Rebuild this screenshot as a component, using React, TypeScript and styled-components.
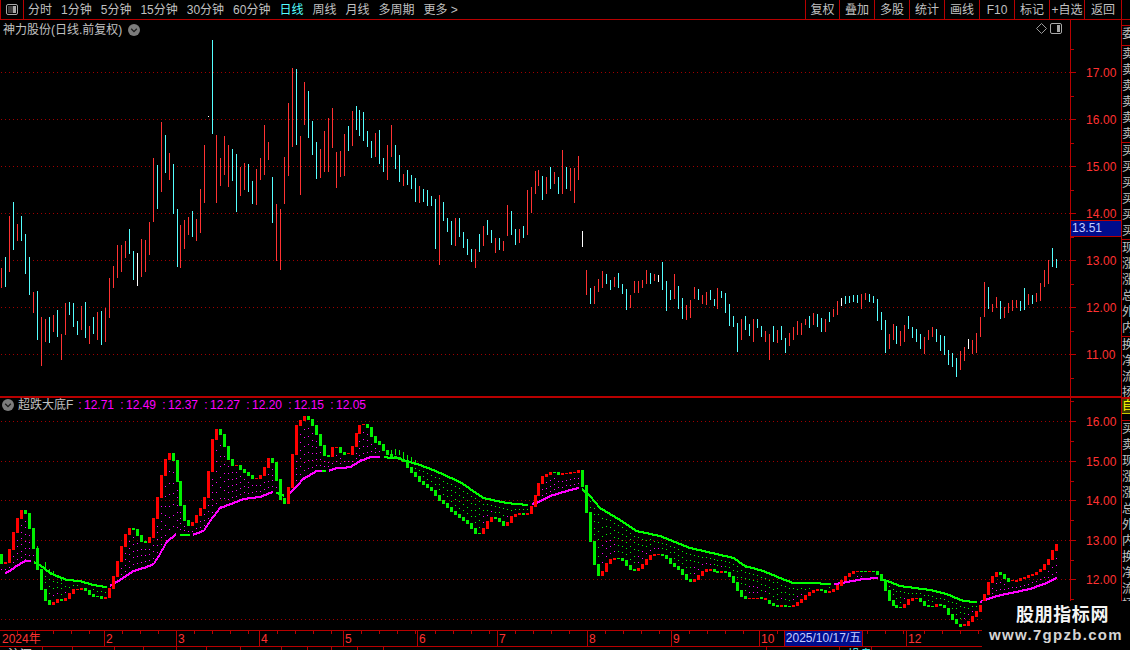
import React from "react";
import styled, { createGlobalStyle } from "styled-components";

const RED_LINE = "#b80000";
const AXIS_RED = "#ff3232";
const UI_FONT = `"Liberation Sans", "Noto Sans CJK SC", sans-serif`;

const GlobalStyle = createGlobalStyle`
  html, body { margin: 0; padding: 0; background: #000; overflow: hidden; }
  #root { width: 1130px; height: 650px; }
`;

const Screen = styled.div`
  position: relative;
  width: 1130px;
  height: 650px;
  background: #000;
  overflow: hidden;
  display: flex;
  flex-direction: column;
  font-family: ${UI_FONT};
  font-size: 12px;
  color: #c0c0c0;
`;

/* ---------- toolbar ---------- */
const Toolbar = styled.div`
  display: flex;
  align-items: stretch;
  height: 20px;
  box-sizing: border-box;
  border-bottom: 1px solid ${RED_LINE};
  flex: none;
`;
const LayoutButton = styled.div`
  width: 24px;
  box-sizing: border-box;
  border-left: 1px solid ${RED_LINE};
  border-right: 1px solid ${RED_LINE};
  display: flex;
  align-items: center;
  justify-content: center;
`;
const Tabs = styled.div`
  display: flex;
  align-items: center;
  gap: 9px;
  margin-left: 4px;
  padding-top: 1px;
`;
const Tab = styled.span<{ $active?: boolean }>`
  color: ${(p) => (p.$active ? "#54ffff" : "#c0c0c0")};
  line-height: 18px;
  white-space: nowrap;
`;
const ToolActions = styled.div`
  display: flex;
  margin-left: auto;
  margin-right: 8px;
`;
const ToolAction = styled.div<{ $w: number; $last?: boolean }>`
  width: ${(p) => p.$w}px;
  box-sizing: border-box;
  border-left: 1px solid ${RED_LINE};
  border-right: ${(p) => (p.$last ? `1px solid ${RED_LINE}` : "0")};
  text-align: center;
  padding-top: 1px;
  line-height: 18px;
  white-space: nowrap;
`;

/* ---------- main ---------- */
const Main = styled.div`
  display: flex;
  flex: none;
  height: 610px;
`;
const Charts = styled.div`
  display: flex;
  flex-direction: column;
  width: 1121px;
`;
const Pane = styled.div<{ $h: number; $rule?: boolean }>`
  position: relative;
  display: flex;
  height: ${(p) => p.$h}px;
  box-sizing: border-box;
  border-bottom: ${(p) => (p.$rule ? `2px solid ${RED_LINE}` : "0")};
`;
const Plot = styled.svg`
  display: block;
  width: 1070px;
  height: 100%;
  flex: none;
`;
const AxisWrap = styled.svg`
  display: block;
  width: 51px;
  height: 100%;
  flex: none;
  border-left: 1px solid ${RED_LINE};
  box-sizing: border-box;
`;
const PaneTitle = styled.div`
  position: absolute;
  top: 2px;
  left: 3px;
  display: flex;
  align-items: center;
  gap: 6px;
  line-height: 16px;
  white-space: nowrap;
`;
const IndicatorTitle = styled(PaneTitle)`
  top: -1px;
  left: 2px;
  gap: 4px;
`;
const IndicatorName = styled.span`
  margin-right: 1px;
`;
const ValueList = styled.div`
  display: flex;
  color: #ff00ff;
  margin-left: 0;
`;
const Value = styled.span`
  width: 42px;
  white-space: nowrap;
  word-spacing: -1px;
`;
const PaneCorner = styled.div`
  position: absolute;
  top: 3px;
  left: 1036px;
  display: flex;
  align-items: center;
  gap: 3px;
`;
const PriceTag = styled.div`
  position: absolute;
  left: 1071px;
  top: 200px;
  width: 50px;
  height: 17px;
  box-sizing: border-box;
  border-top: 1px solid ${RED_LINE};
  border-bottom: 1px solid ${RED_LINE};
  background: #000c8c;
  color: #c4ccff;
  line-height: 15px;
  padding-left: 1px;
`;

/* ---------- clipped side panel ---------- */
const Strip = styled.div`
  width: 9px;
  box-sizing: border-box;
  border-left: 1px solid ${RED_LINE};
  display: flex;
  flex-direction: column;
  overflow: hidden;
`;
const StripGroup = styled.div<{ $h: number; $heavy?: boolean }>`
  height: ${(p) => p.$h}px;
  flex: none;
  box-sizing: border-box;
  border-top: ${(p) => (p.$heavy ? 2 : 1)}px solid ${RED_LINE};
  overflow: hidden;
`;
const StripChar = styled.div<{ $h?: number; $yellow?: boolean }>`
  height: ${(p) => p.$h ?? 16}px;
  line-height: ${(p) => p.$h ?? 16}px;
  width: 12px;
  font-size: 12px;
  color: ${(p) => (p.$yellow ? "#ffff00" : "#c0c0c0")};
  background: ${(p) => (p.$yellow ? "#3a3a00" : "transparent")};
  outline: ${(p) => (p.$yellow ? "1px solid #c8c800" : "0")};
`;

/* ---------- time axis ---------- */
const TimeAxis = styled.div`
  position: relative;
  display: flex;
  height: 16px;
  flex: none;
  box-sizing: border-box;
  border-top: 1px solid ${RED_LINE};
`;
const MonthCell = styled.div<{ $w: number; $first?: boolean }>`
  width: ${(p) => p.$w}px;
  flex: none;
  box-sizing: border-box;
  border-left: ${(p) => (p.$first ? "0" : `1px solid ${RED_LINE}`)};
  padding-left: ${(p) => (p.$first ? 2 : 1)}px;
  color: ${AXIS_RED};
  line-height: 16px;
  white-space: nowrap;
  background: repeating-linear-gradient(
    to right,
    transparent 0,
    transparent 17px,
    ${RED_LINE} 17px,
    ${RED_LINE} 18px
  ) 0 0 / 100% 3px no-repeat;
`;
const CursorDate = styled.div`
  position: absolute;
  left: 784px;
  top: 0;
  width: 79px;
  height: 15px;
  box-sizing: border-box;
  border-left: 1px solid ${RED_LINE};
  border-right: 1px solid ${RED_LINE};
  background: #000c8c;
  color: #c4ccff;
  line-height: 15px;
  text-align: center;
  white-space: nowrap;
`;
const StatusBar = styled.div`
  display: flex;
  flex: none;
  height: 4px;
  box-sizing: border-box;
  border-top: 1px solid ${RED_LINE};
  overflow: hidden;
`;
const StatusCell = styled.div<{ $w: number; $color?: string }>`
  width: ${(p) => p.$w}px;
  flex: none;
  box-sizing: border-box;
  border-right: 1px solid ${RED_LINE};
  color: ${(p) => p.$color ?? "#e0e0e0"};
  line-height: 16px;
  padding-left: 8px;
  white-space: nowrap;
`;

/* ---------- watermark ---------- */
const Watermark = styled.div`
  position: absolute;
  left: 982px;
  top: 601px;
  width: 148px;
  height: 49px;
  background: #000;
  display: flex;
  flex-direction: column;
  align-items: center;
`;
const WatermarkTitle = styled.div`
  margin: 0 0 0 13px;
  font-family: "Noto Sans CJK SC", sans-serif;
  font-weight: 700;
  font-size: 18px;
  line-height: 24px;
  letter-spacing: 0.6px;
  color: #f4f4f4;
`;
const WatermarkUrl = styled.div`
  font-family: "Liberation Sans", sans-serif;
  font-weight: 700;
  font-size: 15px;
  line-height: 20px;
  letter-spacing: 1.3px;
  color: #d4d4d4;
`;

/* ---------- data ---------- */
const xOf = (i: number) => 1 + 4 * i - Math.floor(i / 45);

type Seg = { t: number; b: number; c: string };
const parse = (oy: number, s: string): Seg[] =>
  s
    .trim()
    .split(/\s+/)
    .map((tok) => {
      const m = tok.match(/^(\d+)-(\d+)([a-z])$/)!;
      return {
        t: oy + Math.round(+m[1] / 3),
        b: oy + Math.round(+m[2] / 3),
        c: m[3],
      };
    });

const priceBars: Seg[] = [
  ...parse(40, `684-744r 651-741c 528-696r 486-630c 552-603r 528-603c 582-702c 651-765c 756-819r 753-900c
  831-978r 837-906r 831-909c 825-876r 810-891c 882-960r 789-885r 786-825c 789-861c 843-885c 798-870r 786-894c
  858-912r 831-882c 816-900r 813-915c 803-906r 714-834r 678-744r 615-714r 615-696r 603-654r 567-642c 633-720c
  639-738w 597-711r 600-696r 546-645r 354-546r 375-507c 246-456r 285-399c 339-420r 372-522c 507-681c 555-684r
  540-627r 531-585r 513-591c 537-603r 447-579r 315-489r 228-231w 0-282c 285-489r 354-438r 288-405r 315-441r
  327-423c 342-516c 381-468r 369-450r 372-456c 423-492c 387-495r 354-420r 255-405r 306-360r 411-549c 492-663r
  507-690r 351-492r 189-408r 84-321r 87-315c`),
  ...parse(60, `228-405r 66-195r 93-234c 183-285c 246-357c 267-354r 213-336r 174-336r 144-264r 276-384r 273-351r
  222-348r 198-273c 153-258r 138-210c 150-228c 156-243c 213-261c 243-294c 219-291r 210-312c 294-336c 255-360r
  195-291r 255-327c 285-366c 342-378r 330-375c 345-387c 354-426c 378-429r 387-426c 390-438c 408-438c 417-567c
  405-615r 426-483c 474-516c 483-555c 474-558r 474-531c 516-564c 537-585c 567-606c 567-624r 522-576c 498-558r
  480-525c 510-549c 534-579r 534-570c 543-573r 435-528r 453-525c 507-555c 507-549r 498-534c 390-525r 381-459r
  333-402r 330-378r 348-420c 351-402r 321-387c 336-372r 351-402c 270-402r 321-387c 324-393r 324-429r 288-360r
  513-561w`),
  ...parse(220, `150-225r 204-252c 198-252r 177-216r 153-204r 162-192c 180-210c 171-201r 159-204c 192-222c 207-270c
  225-264r 183-219r 183-219r 180-204r 150-192r 159-192c 162-183r 165-186w 126-210c 183-273c 210-240c 162-237r
  198-267c 234-297c 255-300r 240-294r 201-237r 207-240c 225-252r 216-255r 210-240c 237-258c 204-267r 213-234c
  219-279c 252-318c 288-321c 309-396c 297-360r 288-330c 312-348c 297-366r 297-324c 318-351c 333-366r 342-420r
  318-366c 330-369r 318-360c 354-399c 339-378r 321-360r 303-345r 309-345r 297-315r 288-324c 279-315r 282-321c
  294-336c 297-336r 276-306c 267-291r 243-285r 234-258w 228-252c 228-249c 225-246c 225-249c 222-267r 219-240r
  222-246c 228-249c 237-303c 276-330c 300-399c 342-387r 312-360r 318-372c 333-378r 315-366r 288-327c 321-354c
  327-366c 342-387c 351-402r 330-360r 321-351r 327-366c 345-393c 348-405c 390-435c 399-441c 414-471c 393-450r
  381-423r 357-387w 360-402r 339-399r 291-351r 186-291r 201-267c 252-276r 231-264r 243-297c 261-294r 249-279r
  240-273r 240-264r 243-273c 204-270c 222-255r 225-252c 219-246r 189-243r 150-201r 120-192r 84-141c 117-144c`),
];

const candles: Seg[] = [
  ...parse(410, `432-462g 456-462r 417-459r 366-420r 324-369r 300-327r 300-312g 309-357g 354-417g 414-480g 477-540g
  537-573g 570-585g 576-585r 567-579r 567-573g 564-573r 549-567r 537-552r 537-540r 534-540r 534-543g 540-555g
  552-561g 558-561g 558-567g 561-567r 534-564r 498-537r 453-501r 408-456r 372-411r 354-375r 354-360g 357-378g
  375-396g 393-399g 381-399r 324-384r 261-327r 195-264r 147-198r 129-150r 129-153g 150-216g 213-288g 285-333g
  330-348g 336-348r 315-339r 294-318r 261-297r 183-264r 87-186r 57-90r 57-75g 72-111g 108-150g 147-168g 165-168r
  165-180g 177-189g 186-198g 195-207g 204-207r 195-207r 171-198r 144-174r 144-159g 156-213g 207-270g 264-282g
  231-282r 132-234r 45-135r 30-48r 18-33r 18-30g 27-48g 45-75g 72-108g 105-138g 135-141g 111-141r 111-114r
  111-129g 126-135g 129-132r 108-135r 69-111r 45-72r 42-45r 42-54g 51-81g 78-99g 93-105g 102-123g 120-135g
  132-141g 138-147g 141-150g`),
  ...parse(410, `147-156g 153-174g 171-189g 186-201g 198-216g 213-225g 222-234g 231-243g 240-258g 255-273g 270-282g
  279-294g 291-306g 303-315g 312-324g 321-333g 330-342g 339-357g 354-372g 369-372g 354-372r 333-357r 321-336r
  321-327g 324-336g 333-348g 336-348r 318-339r 312-321r 309-315r 309-315g 309-315r 288-312r 255-291r 219-258r
  198-222r 192-201r 186-195r 186-189g 186-195g 189-195r 189-192r 186-192r 186-189r 180-189r 180-231g 225-309g
  306-396g 393-465g 462-498g 483-498r 459-486r 447-462r 444-450r 444-447g 444-453g 450-468g 465-480g 477-483g
  474-483r 462-477r 447-465r 435-450r 432-438r 432-435r 432-438g 435-447g 444-462g 459-471g 468-480g 477-495g
  492-510g 507-516g 507-516r 495-510r 483-498r 477-486r 477-483r 477-486g 483-489g 483-489r 483-489g 486-501g
  498-519g 516-543g`),
  ...parse(520, `210-231g 228-237g 234-237r 234-237r 234-237r 231-237g 234-240r 240-252g 249-258g 255-261g 255-261r
  255-261g 258-261g 255-261r 246-258r 237-249r 225-240r 216-228r 210-219r 207-213r 207-213g 210-219g 213-219r
  207-216r 195-210r 180-198r 168-183r 159-171r 153-162r 153-156r 153-156g 153-156g 153-156r 153-156g 153-165g
  162-183g 180-213g 210-243g 240-258g 255-264g 261-264g 252-264r 237-255r 234-243r 234-237r 234-246g 243-258g
  255-261g 258-261g 252-261r 252-258g 255-264g 264-285g 282-300g 297-312g 312-321g 312-318r 303-318r 288-306r
  273-291r 255-276r 222-258r 186-225r 168-189r 156-171r 156-165g 162-177g 174-186g 180-183r 180-186r 174-183r
  171-177r 165-174r 162-168r 156-165r 147-156r 132-150r 117-135r 90-120r 72-93r`),
];

/* thin green stems that stick out of the band: [x, top, bottom] */
const wicks: number[][] = [
  [37, 546, 548], [45, 562, 570], [49, 569, 573], [53, 571, 576], [57, 575, 578], [61, 577, 581],
  [391, 450, 455], [395, 449, 455], [399, 450, 455], [403, 452, 459], [407, 455, 461], [411, 457, 461], [415, 460, 465],
];

type Pt = [number, number];
const pts = (ox: number, oy: number, s: string): Pt[] =>
  s
    .trim()
    .split(/\s+/)
    .map((p) => {
      const [x, y] = p.split(",").map(Number);
      return [ox + x / 3, oy + y / 3] as Pt;
    });

const baseLines: { color: string; points: Pt[] }[] = [
  { color: "#ff00ff", points: pts(0, 410, "15,489 30,483 45,471 60,462 75,453 90,453") },
  { color: "#00ff00", points: pts(0, 410, "100,456 120,465 150,489 200,510 240,513 280,525 318,531") },
  { color: "#ff00ff", points: pts(0, 410, "328,528 360,510 400,483 440,471 460,462 480,432 500,396 525,375") },
  { color: "#00ff00", points: pts(0, 410, "540,375 567,375") },
  { color: "#ff00ff", points: pts(0, 410, "577,375 610,363 630,333 660,294 700,279 730,267 780,261 817,246") },
  { color: "#00ff00", points: pts(0, 410, "828,248 850,256") },
  { color: "#ff00ff", points: pts(0, 410, "870,249 910,207 950,183 964,183") },
  { color: "#00ff00", points: pts(0, 410, "964,183 975,183") },
  { color: "#ff00ff", points: pts(0, 410, "985,183 1010,174 1050,172 1080,153 1110,142 1138,141") },
  { color: "#00ff00", points: pts(0, 410, "1150,142 1198,144") },
  { color: "#00ff00", points: pts(400, 410, "0,147 60,165 100,180 180,216 250,264 320,279 382,285") },
  { color: "#ff00ff", points: pts(400, 410, "395,282 410,278 450,258 510,240 535,234") },
  { color: "#00ff00", points: pts(400, 410, "545,237 570,258 600,294 660,330 710,363 780,378 870,414 950,432 1000,444 1014,453") },
  { color: "#00ff00", points: pts(730, 520, "15,117 45,138 100,153 150,174 190,189 245,189 300,192") },
  { color: "#ff00ff", points: pts(730, 520, "310,192 330,190 350,186 400,177 442,174") },
  { color: "#00ff00", points: pts(730, 520, "452,177 480,186 510,198 600,210 650,222 700,243 740,246") },
  { color: "#ff00ff", points: pts(730, 520, "750,246 800,228 900,207 950,189 980,174") },
];

/* the band is a staircase of pixel columns */
const lineCols: { x: number; y: number; h: number; c: string }[] = [];
baseLines.forEach(({ color, points }) => {
  for (let k = 1; k < points.length; k++) {
    const [x0, y0] = points[k - 1];
    const [x1, y1] = points[k];
    const at = (x: number) => Math.round(y0 + ((y1 - y0) * (x - x0)) / (x1 - x0 || 1));
    for (let x = Math.ceil(x0); x <= x1; x++) {
      const y = at(x);
      const next = at(x + 1);
      lineCols.push({ x, y: Math.min(y, next) - 1, h: Math.abs(next - y) + 2, c: color });
    }
  }
});

const allBase = baseLines.flatMap((l) => l.points).sort((a, b) => a[0] - b[0]);
const baseAt = (x: number) => {
  if (x <= allBase[0][0]) return allBase[0][1];
  for (let k = 1; k < allBase.length; k++) {
    const [x1, y1] = allBase[k];
    if (x <= x1) {
      const [x0, y0] = allBase[k - 1];
      return x1 === x0 ? y1 : y0 + ((y1 - y0) * (x - x0)) / (x1 - x0);
    }
  }
  return allBase[allBase.length - 1][1];
};

const cloudDots: { x: number; y: number; c: string }[] = [];
candles.forEach((s, i) => {
  const x = xOf(i);
  const base = baseAt(x);
  const above = (s.t + s.b) / 2 < base;
  const edge = above ? s.b : s.t;
  const gap = edge - base;
  const rows = Math.min(6, Math.floor(Math.abs(gap) / 7));
  for (let r = 1; r <= rows; r++) {
    const f = r / (rows + 1);
    const c = above || (s.c === "r" && f > 0.55) ? "#ff00ff" : "#00ff00";
    cloudDots.push({ x, y: Math.round(base + gap * f), c });
  }
});

const BAR_COLORS: Record<string, string> = { r: "#ff3232", c: "#54ffff", w: "#ffffff" };
const CANDLE_COLORS: Record<string, string> = { r: "#ff0000", g: "#00f000" };

const tabs = ["分时", "1分钟", "5分钟", "15分钟", "30分钟", "60分钟", "日线", "周线", "月线", "多周期", "更多 >"];
const actions: [string, number][] = [
  ["复权", 34], ["叠加", 35], ["多股", 35], ["统计", 35], ["画线", 35],
  ["F10", 35], ["标记", 35], ["+自选", 35], ["返回", 38],
];
const months: [string, number][] = [
  ["2024年", 104], ["2", 72], ["3", 83], ["4", 84], ["5", 74], ["6", 80], ["7", 90],
  ["8", 84], ["9", 88], ["10", 147], ["12", 223],
];
const statusCells: [number, string, string?][] = [
  [43, "沪深"], [30, ""], [42, ""], [29, ""], [33, ""], [30, ""], [34, ""], [41, ""],
  [26, ""], [24, ""], [26, ""], [26, ""], [383, ""], [73, "二", "#e0e0e0"], [32, "操盘", "#54ffff"], [258, ""],
];
const stripGroups: { h: number; chars: string; heavy?: boolean }[] = [
  { h: 20, chars: "委" },
  { h: 97, chars: "卖卖卖卖卖卖" },
  { h: 97, chars: "买买买买买买" },
  { h: 97, chars: "现涨涨总外内" },
  { h: 61, chars: "换净流扬" },
  { h: 23, chars: "", heavy: true },
  { h: 190, chars: "买卖现涨涨总外内换净流扬" },
];

const gridPrice = [72, 119, 166, 213, 260, 307, 354];
const gridIndicator = [421, 461, 500, 540, 579, 619];
const pricesUp = ["17.00", "16.00", "15.00", "14.00", "13.00", "12.00", "11.00"];
const pricesDown = ["16.00", "15.00", "14.00", "13.00", "12.00"];
const values = ["12.71", "12.49", "12.37", "12.27", "12.20", "12.15", "12.05"];

/* ---------- small drawings ---------- */
const Chevron = () => (
  <svg width="12" height="12" viewBox="0 0 12 12">
    <circle cx="6" cy="6" r="6" fill="#7c7c7c" />
    <path d="M3.2 4.8 L6 7.6 L8.8 4.8" fill="none" stroke="#1c1c1c" strokeWidth="1.3" />
  </svg>
);
const PanelIcon = ({ shade }: { shade: string }) => (
  <svg width="12" height="11" viewBox="0 0 12 11" shapeRendering="crispEdges">
    <rect x="2" y="2" width="5" height="7" fill={shade} />
    <rect x="7" y="2" width="3" height="7" fill="#a8a8a8" />
    <rect x="0.5" y="0.5" width="11" height="10" rx="1.5" fill="none" stroke="#a8a8a8" shapeRendering="auto" />
  </svg>
);
const Diamond = () => (
  <svg width="11" height="11" viewBox="0 0 11 11">
    <path d="M5.5 0.5 L10.5 5.5 L5.5 10.5 L0.5 5.5 Z" fill="none" stroke="#9a9a9a" />
  </svg>
);

const Grid = ({ ys }: { ys: number[] }) => (
  <>
    {ys.map((y) => (
      <line key={y} x1="1" x2="1070" y1={y + 0.5} y2={y + 0.5} stroke="#a00000" strokeDasharray="1 3" />
    ))}
  </>
);

const Axis = ({ top, h, ys, labels }: { top: number; h: number; ys: number[]; labels: string[] }) => {
  const step = ys[1] - ys[0];
  return (
    <AxisWrap viewBox={`1071 ${top} 50 ${h}`} shapeRendering="crispEdges">
      {ys.map((y, i) => (
        <g key={y}>
          <rect x="1071" y={y} width="5" height="1" fill={RED_LINE} />
          <rect x="1071" y={Math.round(y + step / 2)} width="3" height="1" fill={RED_LINE} />
          {labels[i] && (
            <text x="1086" y={y + 5} fill={AXIS_RED} fontSize="12" fontFamily="Liberation Sans" letterSpacing="0.1">
              {labels[i]}
            </text>
          )}
        </g>
      ))}
      <rect x="1071" y={Math.round(ys[0] - step / 2)} width="3" height="1" fill={RED_LINE} />
    </AxisWrap>
  );
};

export default function App() {
  return (
    <Screen>
      <GlobalStyle />
      <Toolbar>
        <LayoutButton>
          <PanelIcon shade="#3c3c3c" />
        </LayoutButton>
        <Tabs>
          {tabs.map((t) => (
            <Tab key={t} $active={t === "日线"}>{t}</Tab>
          ))}
        </Tabs>
        <ToolActions>
          {actions.map(([t, w], i) => (
            <ToolAction key={t} $w={w} $last={i === actions.length - 1}>{t}</ToolAction>
          ))}
        </ToolActions>
      </Toolbar>

      <Main>
        <Charts>
          <Pane $h={378} $rule>
            <Plot viewBox="0 20 1070 376" shapeRendering="crispEdges">
              <Grid ys={gridPrice} />
              {priceBars.map((s, i) => (
                <rect key={i} x={xOf(i)} y={s.t} width="1" height={s.b - s.t} fill={BAR_COLORS[s.c]} />
              ))}
            </Plot>
            <Axis top={20} h={376} ys={gridPrice} labels={pricesUp} />
            <PaneTitle>
              <span>神力股份(日线.前复权)</span>
              <Chevron />
            </PaneTitle>
            <PaneCorner>
              <Diamond />
              <PanelIcon shade="#000000" />
            </PaneCorner>
            <PriceTag>13.51</PriceTag>
          </Pane>

          <Pane $h={232}>
            <Plot viewBox="0 398 1070 232" shapeRendering="crispEdges">
              <Grid ys={gridIndicator} />
              {cloudDots.map((d, i) => (
                <rect key={i} x={d.x} y={d.y} width="1" height="1" fill={d.c} />
              ))}
              {wicks.map(([x, t, b], i) => (
                <rect key={i} x={x} y={t} width="1" height={b - t} fill="#00f000" />
              ))}
              {lineCols.map((d, i) => (
                <rect key={i} x={d.x} y={d.y} width="1" height={d.h} fill={d.c} />
              ))}
              {candles.map((s, i) => (
                <rect
                  key={i}
                  x={xOf(i) - 1}
                  y={s.t}
                  width="3"
                  height={Math.max(1, s.b - s.t)}
                  fill={CANDLE_COLORS[s.c]}
                />
              ))}
            </Plot>
            <Axis top={398} h={232} ys={gridIndicator} labels={pricesDown} />
            <IndicatorTitle>
              <Chevron />
              <IndicatorName>超跌大底F</IndicatorName>
              <ValueList>
                {values.map((v) => (
                  <Value key={v}>: {v}</Value>
                ))}
              </ValueList>
            </IndicatorTitle>
          </Pane>
        </Charts>

        <Strip>
          <StripChar $h={5} />
          {stripGroups.map((g, i) => (
            <StripGroup key={i} $h={g.h} $heavy={g.heavy}>
              {g.heavy ? (
                <StripChar $h={14} $yellow>自</StripChar>
              ) : (
                g.chars.split("").map((c, k) => <StripChar key={k}>{c}</StripChar>)
              )}
            </StripGroup>
          ))}
        </Strip>
      </Main>

      <TimeAxis>
        {months.map(([t, w], i) => (
          <MonthCell key={t} $w={w} $first={i === 0}>{t}</MonthCell>
        ))}
        <CursorDate>2025/10/17/五</CursorDate>
      </TimeAxis>
      <StatusBar>
        {statusCells.map(([w, t, color], i) => (
          <StatusCell key={i} $w={w} $color={color}>{t}</StatusCell>
        ))}
      </StatusBar>

      <Watermark>
        <WatermarkTitle>股朋指标网</WatermarkTitle>
        <WatermarkUrl>www.7gpzb.com</WatermarkUrl>
      </Watermark>
    </Screen>
  );
}
